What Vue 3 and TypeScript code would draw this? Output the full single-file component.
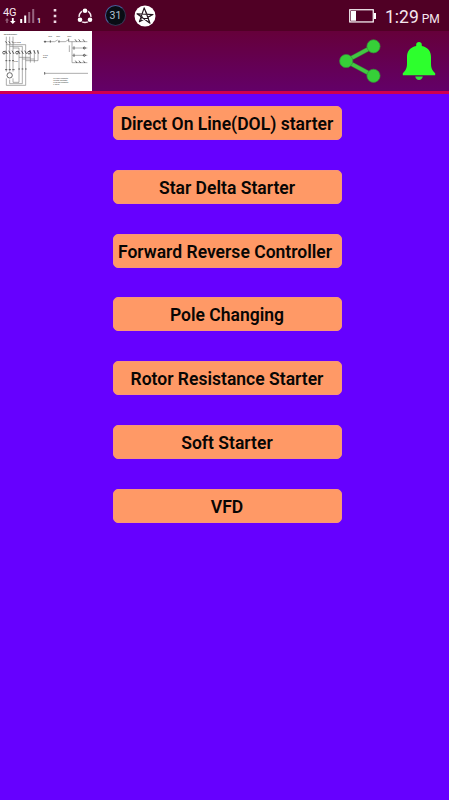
<script setup lang="ts">
interface Starter {
  label: string
  nudge?: boolean
}

const starters: Starter[] = [
  { label: 'Direct On Line(DOL) starter' },
  { label: 'Star Delta Starter' },
  { label: 'Forward Reverse Controller', nudge: true },
  { label: 'Pole Changing' },
  { label: 'Rotor Resistance Starter' },
  { label: 'Soft Starter' },
  { label: 'VFD' },
]
</script>

<template>
  <div class="screen">
    <header class="status">
      <div class="network">
        <div class="cell">
          <span class="gen">4G</span>
          <svg class="arrows" viewBox="0 0 12 6">
            <path d="M3 0L5 2.5H3.7V5H2.3V2.5H1z" fill="#98647f" />
            <path d="M8.8 6L6 3H7.9V0H9.7V3H11.6z" fill="#fff" />
          </svg>
        </div>
        <svg class="signal" viewBox="0 0 16 16">
          <path d="M1.2 11v4M5.2 7.5V15" stroke="#fff" stroke-width="2" />
          <path d="M9.2 4v11M13.2 1v14" stroke="#98647f" stroke-width="2" />
        </svg>
        <span class="sim">1</span>
      </div>
      <svg class="dots" viewBox="0 0 4 16">
        <path d="M.7 1h2.6v2.6H.7zM.7 6.7h2.6v2.6H.7zM.7 12.4h2.6V15H.7z" fill="#eed7e3" />
      </svg>
      <svg class="ring" viewBox="0 0 16 16">
        <circle cx="8" cy="8.5" r="5.9" fill="none" stroke="#f7e9f0" stroke-width="1.5" />
        <circle cx="8" cy="2.8" r="2.9" fill="#500025" />
        <circle cx="3" cy="11.7" r="2.9" fill="#500025" />
        <circle cx="13" cy="11.7" r="2.9" fill="#500025" />
        <circle cx="8" cy="2.8" r="2.3" fill="#fff" />
        <circle cx="3" cy="11.7" r="2.3" fill="#fff" />
        <circle cx="13" cy="11.7" r="2.3" fill="#fff" />
      </svg>
      <div class="day">31</div>
      <svg class="star" viewBox="0 0 22 22">
        <circle cx="11" cy="11" r="10.5" fill="#fff" />
        <path d="M10.2 2.8L16 18.3L3 8.8L19 9.6L5.4 16.7Z" fill="none" stroke="#24151e" stroke-width="1.1" stroke-linejoin="round" />
        <path d="M11.3 5.6L13.3 9.5M5.2 9.4L8.3 11.3L6.8 16M17.5 10L14 12.6L15.3 17.5" fill="none" stroke="#24151e" stroke-width=".7" />
      </svg>
      <svg class="battery" viewBox="0 0 27 14">
        <rect x=".75" y=".75" width="23.5" height="12.2" fill="none" stroke="#fff" stroke-width="1.2" />
        <path d="M2 2h5v9.7H2zM25 4h2v6h-2z" fill="#fff" />
      </svg>
      <div class="clock"><span>1:29</span><small>PM</small></div>
    </header>

    <nav class="bar">
      <svg class="diagram" viewBox="0 9 276 180" preserveAspectRatio="none">
        <rect y="9" width="276" height="180" fill="#fff" />
        <g class="text-mini">
          <text x="11" y="21" textLength="40">Star Delta Diagram</text>
          <text x="42" y="45">L1 MCB</text>
          <text x="145" y="27">OLR</text><text x="169" y="27">Stop</text><text x="202" y="27">Start</text>
          <text x="129" y="83">C.S.D</text><text x="129" y="90">Diag</text>
          <text x="160" y="152">K1  Main contactor</text>
          <text x="160" y="158">K2  Star contactor</text>
          <text x="160" y="165">K3  Delta contactor</text>
          <text x="160" y="172">F  Relay</text>
          <text x="42" y="102">Fuse</text>
        </g>
        <g fill="none" stroke="#666" stroke-width="1.6">
          <path d="M19 26v105M29 26v105M39 26v105M19 50h58v18M29 55h38v13M39 60h18v8M57 68v57M67 68v57M77 68v57M91 66v38M103 66v38M114 66v32M57 88h34M67 93h36M77 98h37M19 151v21h58v-47M29 155v12h38v-42M39 151v12h18v-38" />
          <path d="M133 41h31l9-5M174 41h22l8-5M205 41h11v63M216 41h46M216 60h46M216 82h46M216 104h46M208 52v20M134 136h130" />
        </g>
        <g fill="none" stroke="#222" stroke-width="2">
          <path d="M16 40l5 6m5-6l5 6m5-6l5 6M16 68l6 10m4-10l6 10m4-10l6 10M54 68l6 10m4-10l6 10m4-10l6 10M89 67l5 10m7-10l5 10m6-10l4 10M16 98h6m4 0h6m4 0h6M15 125h7m4 0h7m4 0h7M55 123h5m5 0h5m5 0h5" />
          <circle cx="29" cy="142" r="8" />
          <circle cx="12" cy="74" r="4" /><circle cx="51" cy="74" r="4" /><circle cx="87" cy="74" r="4" />
          <circle cx="135" cy="41" r="2" /><circle cx="253" cy="60" r="3" /><circle cx="253" cy="82" r="3" />
          <path d="M225 34l5 7m6-7l5 7m8-7l5 7M222 55v10M222 77v10M226 98l5 7m6-7l5 7m8-7l5 7M151 37v7m26-7v7m29-12v8M134 132v8" />
        </g>
      </svg>
      <div class="actions">
        <svg class="share" viewBox="0 0 42 44" aria-label="Share">
          <g fill="none" stroke="#388b38" stroke-width="4.6"><path d="M35 7L7 22L35 37" /></g>
          <g fill="none" stroke="#43c743" stroke-width="3.4"><path d="M35 7L7 22L35 37" /></g>
          <g fill="#36cf38" stroke="#398a3c" stroke-width=".7">
            <circle cx="34.5" cy="7.3" r="6.6" /><circle cx="7.2" cy="22" r="6.6" /><circle cx="34.5" cy="36.8" r="6.6" />
          </g>
        </svg>
        <svg class="bell" viewBox="0 0 34 38" aria-label="Notifications">
          <path d="M17 0C15.3 0 14.2 1.1 14.2 2.7V4C8.2 5.1 5 9.4 5 15V21.5C5 26.4 3.6 28.6.8 31.2V33.2H33.2V31.2C30.4 28.6 29 26.4 29 21.5V15C29 9.4 25.8 5.1 19.8 4V2.7C19.8 1.1 18.7 0 17 0Z" fill="#2dff2d" />
          <path d="M13.2 34.5H20.8C20.2 36.8 19 38 17 38S13.8 36.8 13.2 34.5Z" fill="#2ce936" />
        </svg>
      </div>
    </nav>

    <main class="menu">
      <button v-for="item in starters" :key="item.label" type="button" class="starter" :class="{ nudge: item.nudge }">
        {{ item.label }}
      </button>
    </main>
  </div>
</template>

<style>
body { margin: 0; background: #6600ff; }
</style>

<style scoped>
.screen { width: 449px; height: 800px; overflow: hidden; background: #6600ff; font-family: Roboto, "Liberation Sans", sans-serif; }
.status { display: flex; align-items: center; height: 31px; box-sizing: border-box; background: #500025; color: #f6e7ef; }
.network { display: flex; width: 48px; height: 22px; padding-left: 3px; box-sizing: border-box; }
.cell { display: flex; flex-direction: column; width: 15px; }
.gen { font-size: 11px; line-height: 11px; letter-spacing: -.3px; margin-top: 2px; }
.arrows { width: 12px; height: 6px; margin: 0 0 0 1px; }
.signal { width: 16px; height: 16px; margin: 3px 0 0 2px; }
.sim { font-size: 7px; line-height: 7px; font-weight: 700; margin: 13px 0 0 1px; }
.dots { width: 4px; height: 16px; margin-left: 5px; }
.ring { width: 16px; height: 16px; margin-left: 20px; }
.day { display: flex; align-items: center; justify-content: center; box-sizing: border-box; width: 21px; height: 21px; margin-left: 12px; border: 1.5px solid #343653; border-left-color: #485d9a; border-top-color: #485d9a; border-radius: 50%; background: #080d14; color: #b5c3d1; font-size: 10.5px; }
.star { width: 22px; height: 22px; margin-left: 8px; }
.battery { width: 27px; height: 14px; margin-left: 193px; }
.clock { display: flex; align-items: baseline; margin-left: 9px; line-height: 22px; margin-top: 4px; }
.clock span { font-size: 17.5px; }
.clock small { font-size: 12px; margin-left: 3px; }
.bar { display: flex; justify-content: space-between; height: 63px; box-sizing: border-box; border-bottom: 3px solid #d00050; background: linear-gradient(#66003a, #630068); }
.diagram { width: 92px; height: 60px; display: block; }
.text-mini { font-size: 5.5px; fill: #222; font-family: "Liberation Sans", sans-serif; }
.actions { display: flex; gap: 21px; padding: 8px 13px 0 0; }
.share { width: 42px; height: 44px; }
.bell { width: 34px; height: 38px; margin-top: 3px; }
.menu { display: flex; flex-direction: column; align-items: center; gap: 29.8px; padding: 12px 0 0 5px; }
.starter { width: 229px; height: 34px; box-sizing: border-box; padding: 2px 0 0; border: 1px solid #f89579; border-radius: 5px; background: #ff9966; color: #080604; font: 600 17.55px/20px Roboto, "Liberation Sans", sans-serif; white-space: nowrap; }
.nudge { padding-right: 4px; }
</style>
